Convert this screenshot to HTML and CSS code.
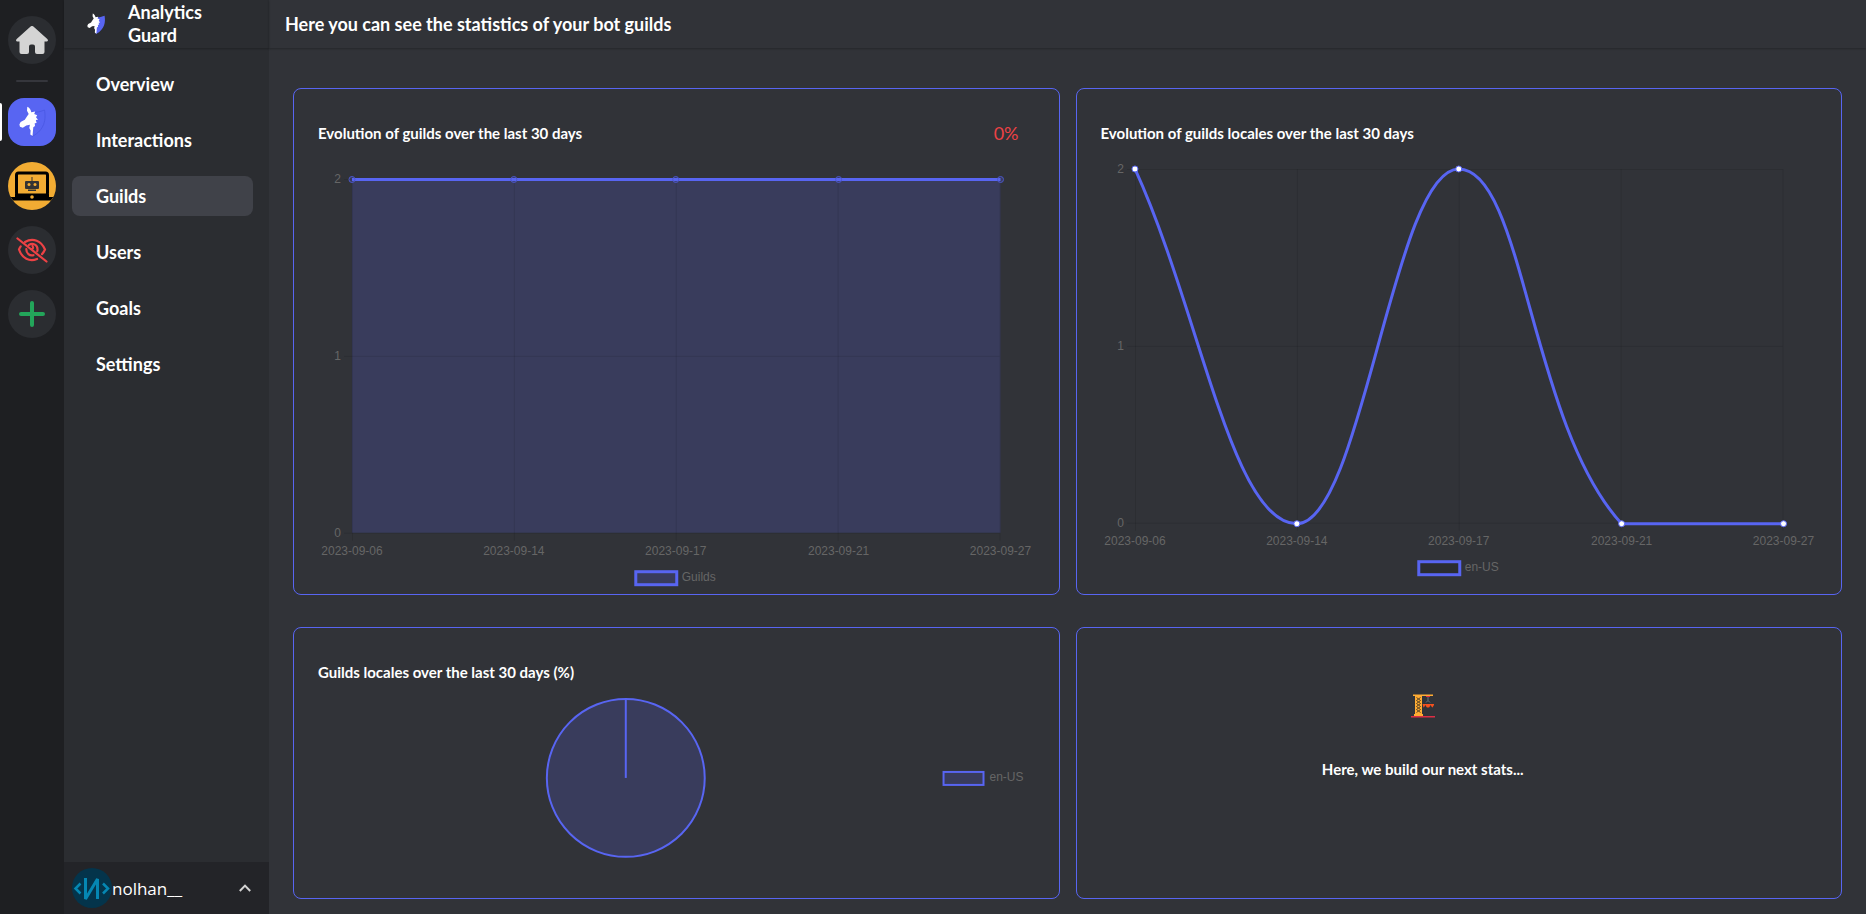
FILE: index.html
```html
<!DOCTYPE html>
<html lang="en">
<head>
<meta charset="utf-8">
<title>Analytics Guard</title>
<link rel="stylesheet" href="styles.css">
</head>
<body>
<svg class="defs" aria-hidden="true">
  <symbol id="horse" viewBox="0 0 28 32">
    <path class="horse-shield" d="M13.500 6c5 1 9-.5 13-2 1.500 9 .5 20-12.500 26.500-1.500-3-1.500-7-1-10z"/>
    <path class="horse-head" d="M9.300.8c2 .8 3.500 2.800 4 5.400l3.900-.7-1 2.500 3 1.200-1.200 2 2 2.600-2.200.2.800 3-1.900.2.300 2.800-1.700 1.200-.8 8.800-2.200-1.500.3-4-1.300-2.500.6-3.200-3.600.6-3.500 2.300-2.800-1-.6-2.200 1.200-2.400 4.200-2.400 2.300-3.500 1.600-2.200-1.700-3.200z"/>
  </symbol>
</svg>
<div class="app">
  <nav class="rail" aria-label="Bots">
    <a class="rail-item" href="#" aria-label="Home">
      <svg width="32" height="28" viewBox="0 0 32 28"><path fill="#d4d4d4" d="M14.600.6a2 2 0 0 1 2.800 0L31.300 13c1.300 1.200.5 2.500-.7 2.500H28.500V26a2 2 0 0 1-2 2H21a2 2 0 0 1-2-2v-5.500a2 2 0 0 0-2-2h-2a2 2 0 0 0-2 2V26a2 2 0 0 1-2 2H5.500a2 2 0 0 1-2-2V15.500H1.400C.2 15.500-.6 14.200.7 13z"/></svg>
    </a>
    <hr class="rail-divider">
    <a class="rail-item rail-item-active" href="#" aria-label="Analytics Guard">
      <svg class="logo-flat" width="28" height="32"><use href="#horse"/></svg>
    </a>
    <a class="rail-item" href="#" aria-label="Robot">
      <svg width="48" height="48" viewBox="0 0 48 48">
        <defs><clipPath id="disc"><circle cx="24" cy="24" r="24"/></clipPath></defs>
        <g clip-path="url(#disc)">
          <path fill="#f2ac33" d="M0 0h48v48H0z"/>
          <rect x="8.500" y="11" width="31" height="22" rx="2" fill="none" stroke="#000" stroke-width="3"/>
          <path d="M3 35h42v1l-2 2.500H5L3 36z"/>
          <path d="M7 32h34v4H7z"/>
          <circle cx="24" cy="35" r="1.800" fill="#f2ac33"/>
          <path fill="#333" d="M23.500 15h1v4h5.500a1 1 0 0 1 1 1v6a1 1 0 0 1-1 1h-12a1 1 0 0 1-1-1v-6a1 1 0 0 1 1-1h5.500zM20 27.500h8v1.500h-8z"/>
          <circle cx="21" cy="22.500" r="1.500" fill="#f2ac33"/><circle cx="27" cy="22.500" r="1.500" fill="#f2ac33"/>
        </g>
      </svg>
    </a>
    <a class="rail-item" href="#" aria-label="Hidden bots">
      <svg width="32" height="26" viewBox="0 0 32 26" fill="none" stroke="#ed4245" stroke-width="2.200" stroke-linecap="round">
        <path d="M9 5C17 0 25.500 4 29 12.500c-.8 1.800-1.800 3.400-3 4.600M21 22C13.500 25 6 21.500 3 12.500c.5-1.200 1-2.200 1.700-3.200"/>
        <path d="M13 7.800c4-2.600 9 .4 8.500 5.200l-.3 1.200M17.500 18.200c-4 1-7.200-2-7.200-6M1.500 1.500l29 23"/>
        <path d="M16.500 9c1 1.500.7 2.600-.5 3"/>
      </svg>
    </a>
    <a class="rail-item" href="#" aria-label="Add a bot">
      <svg width="26" height="26" viewBox="0 0 26 26" fill="none" stroke="#23a55a" stroke-width="4" stroke-linecap="round"><path d="M13 2v22M2 13h22"/></svg>
    </a>
  </nav>

  <aside class="sidebar">
    <div class="brand">
      <svg width="20" height="22"><use href="#horse"/></svg>
      <span class="brand-name">Analytics Guard</span>
    </div>
    <nav class="menu" aria-label="Sections">
      <a class="menu-item" href="#">Overview</a>
      <a class="menu-item" href="#">Interactions</a>
      <a class="menu-item menu-item-active" href="#" aria-current="page">Guilds</a>
      <a class="menu-item" href="#">Users</a>
      <a class="menu-item" href="#">Goals</a>
      <a class="menu-item" href="#">Settings</a>
    </nav>
    <button class="account" type="button">
      <svg width="40" height="40" viewBox="0 0 40 40" fill="none" stroke="#0587b3" stroke-width="2.500">
        <circle cx="20" cy="20" r="20" fill="#04344b" stroke="none"/>
        <path d="M8.500 15.500L3.500 20.500l5 5M31 15.500l5 5-5 5"/><path stroke-width="3" stroke-linejoin="bevel" d="M13.500 10v21L25.500 11v20"/>
      </svg>
      <span class="account-name">nolhan__</span>
      <svg width="12" height="8" viewBox="0 0 12 8" fill="none" stroke="#d4d4d4" stroke-width="2"><path d="M.8 7L6 1.600 11.200 7"/></svg>
    </button>
  </aside>

  <main class="main">
    <header class="topbar"><h1 class="topbar-title">Here you can see the statistics of your bot guilds</h1></header>
    <div class="cards">
      <section class="card card-chart">
        <div class="card-head card-head-trend"><h2 class="card-title">Evolution of guilds over the last 30 days</h2><span class="trend">0%</span></div>
        <svg class="chart" viewBox="0 0 717 421" role="img" aria-label="Guilds by date">
          <path class="area" d="M34 7.500H683V361H34z"/>
          <path class="grid" d="M26 7.500H682M26 184.500H682M26 361.500H682M34.500 7v362M196.500 7v362M358.500 7v362M520.500 7v362M682.500 7v362"/>
          <path class="line" d="M34 7.500H683"/>
          <g class="ring"><circle cx="34" cy="7.500" r="3"/><circle cx="196" cy="7.500" r="3"/><circle cx="358" cy="7.500" r="3"/><circle cx="521" cy="7.500" r="3"/><circle cx="683" cy="7.500" r="3"/></g>
          <g class="label label-end"><text x="23" y="11">2</text><text x="23" y="188">1</text><text x="23" y="365">0</text></g>
          <g class="label label-mid"><text x="34" y="383">2023-09-06</text><text x="196" y="383">2023-09-14</text><text x="358" y="383">2023-09-17</text><text x="521" y="383">2023-09-21</text><text x="683" y="383">2023-09-27</text></g>
          <rect class="key key-thick" x="318" y="400" width="41" height="13"/>
          <text class="label" x="364" y="409">Guilds</text>
        </svg>
      </section>

      <section class="card card-chart">
        <div class="card-head card-head-chart"><h2 class="card-title">Evolution of guilds locales over the last 30 days</h2></div>
        <svg class="chart" viewBox="0 0 717 421" role="img" aria-label="Guild locales by date">
          <path class="grid" d="M26 7.500H682M26 184.500H682M26 361.500H682M34.500 7v362M196.500 7v362M358.500 7v362M520.500 7v362M682.500 7v362"/>
          <path class="line" d="M34 7C99 149 131 362 196 362S293 7 358 7C423 7 429 262 521 362H683"/>
          <g class="dot"><circle cx="34" cy="7" r="3"/><circle cx="196" cy="362" r="3"/><circle cx="358" cy="7" r="3"/><circle cx="521" cy="362" r="3"/><circle cx="683" cy="362" r="3"/></g>
          <g class="label label-end"><text x="23" y="11">2</text><text x="23" y="188">1</text><text x="23" y="365">0</text></g>
          <g class="label label-mid"><text x="34" y="383">2023-09-06</text><text x="196" y="383">2023-09-14</text><text x="358" y="383">2023-09-17</text><text x="521" y="383">2023-09-21</text><text x="683" y="383">2023-09-27</text></g>
          <rect class="key key-thick key-dark" x="318" y="400" width="41" height="13"/>
          <text class="label" x="364" y="409">en-US</text>
        </svg>
      </section>

      <section class="card">
        <div class="card-head card-head-pie"><h2 class="card-title">Guilds locales over the last 30 days (%)</h2></div>
        <svg class="chart" viewBox="0 0 717 180" role="img" aria-label="Guild locales share">
          <circle class="key" cx="308" cy="84" r="79"/>
          <path class="key" d="M308 84V5"/>
          <rect class="key" x="626" y="78" width="40" height="13"/>
          <text class="label" x="672" y="87">en-US</text>
        </svg>
      </section>

      <section class="card card-soon">
        <svg width="24" height="24" viewBox="0 0 24 24" role="img" aria-label="Construction crane">
          <path fill="#ffac33" d="M2 .5h20V2H2zM4 2h7v19H4zM3 20h9v2H3z"/>
          <path fill="none" stroke="#5a4524" stroke-width="1" d="M5.500 3.500l4 3-4 3 4 3-4 3 4 3M9.500 3.500l-4 3 4 3-4 3 4 3-4 3"/>
          <path fill="#dd2e44" d="M0 22h24v1.500H0zM15 2h4v1h-4z"/>
          <path fill="none" stroke="#66757f" stroke-width="1" d="M17 3v3.500M15 8.500l2-2 2 2"/>
          <path fill="#f4511e" d="M11.500 10H23v1l-1.500 2.500h-9z"/><path fill="#313338" d="M12.500 14l2-3 1.500 3zM21.500 14l-2-3-1.500 3z"/>
        </svg>
        <h2 class="card-title">Here, we build our next stats...</h2>
      </section>
    </div>
  </main>
</div>
</body>
</html>
```

FILE: styles.css
```css
* { box-sizing: border-box; }
body {
  margin: 0;
  background: #313338;
  color: #fff;
  font-family: Lato, "Open Sans", sans-serif;
  font-size: 18px;
}
a { color: inherit; text-decoration: none; }
h1, h2 { margin: 0; font-weight: 700; }
svg { display: block; flex: none; }
.defs { position: absolute; width: 0; height: 0; }
.app { display: flex; min-height: 100vh; }

.rail {
  display: flex;
  flex: none;
  flex-direction: column;
  align-items: center;
  gap: 16px;
  width: 64px;
  padding-top: 16px;
  background: #1e1f22;
}
.rail-item {
  position: relative;
  display: grid;
  place-items: center;
  width: 48px;
  height: 48px;
  border-radius: 50%;
  background: #2b2d31;
}
.rail-item-active { border-radius: 16px; background: #5865f2; }
.rail-item-active::before {
  content: "";
  position: absolute;
  left: -8px;
  top: 5px;
  width: 2px;
  height: 38px;
  border-radius: 0 2px 2px 0;
  background: #fff;
}
.rail-divider { width: 32px; height: 2px; margin: 0; border: 0; border-radius: 1px; background: #35363c; }
.horse-shield { fill: #5865f2; stroke: var(--shield-edge, none); }
.horse-head { fill: #fff; }
.logo-flat { --shield-edge: #4c5ae6; }

.sidebar { display: flex; flex: none; flex-direction: column; width: 205px; background: #2b2d31; }
.brand {
  display: flex;
  align-items: center;
  gap: 22px;
  height: 48px;
  padding: 0 56px 0 22px;
  box-shadow: 0 1px 2px rgba(0, 0, 0, .25);
}
.brand-name { font-weight: 700; line-height: 23px; }
.menu { display: flex; flex: 1; flex-direction: column; gap: 16px; padding: 16px 16px 16px 8px; }
.menu-item { padding: 0 24px; border-radius: 8px; font-weight: 700; line-height: 40px; }
.menu-item-active { background: #404249; }
.account {
  display: flex;
  align-items: center;
  height: 52px;
  padding: 0 18px 0 8px;
  border: 0;
  background: #232428;
  color: #fff;
  font: 17px "Open Sans", sans-serif;
  text-align: left;
}
.account-name { flex: 1; }

.main { flex: 1; min-width: 0; }
.topbar { display: flex; align-items: center; height: 48px; padding: 0 16px; box-shadow: 0 1px 2px rgba(0, 0, 0, .25); }
.topbar-title { font-size: 18px; }
.cards { display: grid; grid-template-columns: repeat(2, minmax(0, 1fr)); gap: 32px 16px; padding: 40px 24px 15px; }
.card { padding: 24px; border: 1px solid #5865f2; border-radius: 8px; }
.card-chart { padding-bottom: 1px; }
.card-head { display: flex; align-items: center; justify-content: space-between; height: 40px; }
.card-head-pie { margin-bottom: 2px; }
.card-head-chart { margin-bottom: 9px; }
.card-head-trend { margin-bottom: 19px; padding-right: 16px; }
.card-title { font-size: 15px; }
.trend { color: #ed4245; }
.card-soon { display: flex; flex-direction: column; align-items: center; gap: 42px; padding-top: 66px; padding-right: 96px; }

.chart { width: 100%; height: auto; }
.grid { fill: none; stroke: rgba(0, 0, 0, .1); }
.area { fill: rgba(88, 101, 242, .2); }
.line { fill: none; stroke: #5865f2; stroke-width: 3; }
.ring { fill: rgba(88, 101, 242, .2); stroke: #4b56c8; }
.dot { fill: #fff; stroke: #5865f2; }
.key { fill: rgba(88, 101, 242, .2); stroke: #5865f2; stroke-width: 2; }
.key-thick { stroke-width: 3; }
.key-dark { fill: #2b2d31; }
.label { fill: #666; font: 12px "Liberation Sans", Arial, sans-serif; }
.label-mid { text-anchor: middle; }
.label-end { text-anchor: end; }
```
